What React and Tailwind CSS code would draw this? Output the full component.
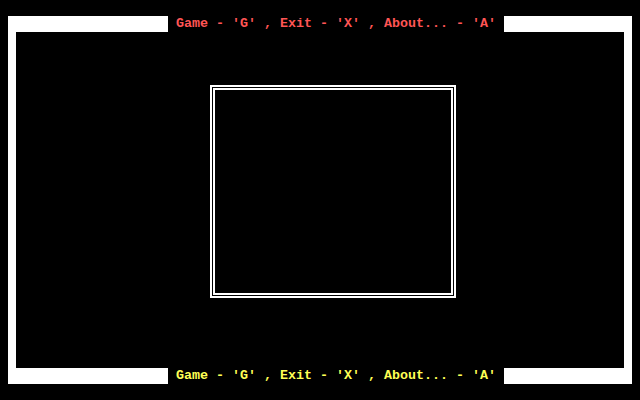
import React from 'react';

const MENU = "Game - 'G' , Exit - 'X' , About... - 'A'";

const MenuLabel = ({ className }) => (
  <div
    className={`absolute left-[168px] w-[336px] h-4 bg-black px-2 text-[13.33px] leading-4 font-bold whitespace-pre ${className}`}
    style={{ fontFamily: '"Liberation Mono", "DejaVu Sans Mono", monospace' }}
  >
    {MENU}
  </div>
);

const App = () => {
  return (
    <div className="relative w-[640px] h-[400px] bg-black pt-4 px-2 pb-4 overflow-hidden">
      <div className="w-[624px] h-[368px] border-t-[16px] border-b-[16px] border-x-[8px] border-white bg-black">
        <div className="ml-[194px] mt-[53px] w-[246px] h-[213px] border-2 border-white p-px">
          <div className="w-full h-full border-2 border-white" />
        </div>
      </div>
      <MenuLabel className="top-4 text-[#ff5555]" />
      <MenuLabel className="top-[368px] text-[#ffff55]" />
    </div>
  );
};

export default App;
